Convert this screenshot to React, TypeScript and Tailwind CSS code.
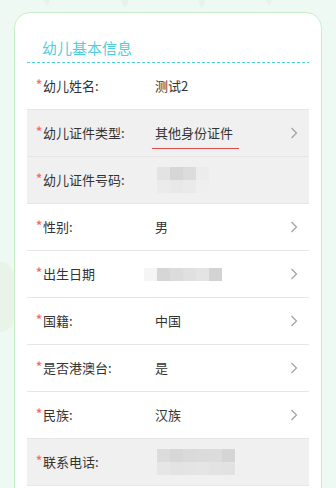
import type { ReactNode } from 'react';

const font = '"Noto Sans CJK SC", "Liberation Sans", sans-serif';

type Row = {
    label: string;
    value?: ReactNode;
    arrow?: boolean;
    gray?: boolean;
};

function Mosaic({ rows, offset = 0 }: { rows: string[][]; offset?: number }) {
    return (
        <div className="flex flex-col" style={{ marginLeft: offset }}>
            {rows.map((r, i) => (
                <div key={i} className="flex">
                    {r.map((c, j) => (
                        <span key={j} className="block h-[13px] w-[13px]" style={{ background: c }} />
                    ))}
                </div>
            ))}
        </div>
    );
}

function Chevron() {
    return (
        <svg width="8" height="12" viewBox="0 0 8 12" className="shrink-0">
            <path d="M1.5 1 L6.5 6 L1.5 11" fill="none" stroke="#a0a0a0" strokeWidth="1.2" />
        </svg>
    );
}

const rows: Row[] = [
    { label: '幼儿姓名:', value: '测试2' },
    {
        label: '幼儿证件类型:',
        arrow: true,
        gray: true,
        value: (
            <span className="-ml-[3px] box-border block h-[32px] w-[87px] border-b border-[#dc4b4b] pl-[3px] pt-[6px] leading-[20px]">
                其他身份证件
            </span>
        ),
    },
    {
        label: '幼儿证件号码:',
        gray: true,
        value: (
            <Mosaic
                offset={2}
                rows={[
                    ['#e3e3e3', '#d6d6d6', '#dcdcdc', '#ececec'],
                    ['#ebebeb', '#e8e8e8', '#eaeaea', '#efefef'],
                ]}
            />
        ),
    },
    { label: '性别:', value: '男', arrow: true },
    {
        label: '出生日期',
        arrow: true,
        value: (
            <Mosaic
                offset={-11}
                rows={[['#f5f5f5', '#d6d6d6', '#dcdcdc', '#e0e0e0', '#e4e4e4', '#d3d3d3']]}
            />
        ),
    },
    { label: '国籍:', value: '中国', arrow: true },
    { label: '是否港澳台:', value: '是', arrow: true },
    { label: '民族:', value: '汉族', arrow: true },
    {
        label: '联系电话:',
        gray: true,
        value: (
            <Mosaic
                offset={2}
                rows={[
                    ['#dcdcdc', '#d7d7d7', '#dadada', '#dbdbdb', '#dcdcdc', '#d5d5d5'],
                    ['#e6e6e6', '#e3e3e3', '#e4e4e4', '#e5e5e5', '#e3e3e3', '#e2e2e2'],
                ]}
            />
        ),
    },
];

function Leaf({ className }: { className: string }) {
    return (
        <svg viewBox="0 0 20 30" className={className}>
            <path d="M10 0 C18 8 18 20 10 30 C2 20 2 8 10 0 Z" fill="#dcefe6" />
        </svg>
    );
}

export default function App() {
    return (
        <div
            className="relative h-[488px] w-[336px] overflow-hidden bg-[#eef9f3] pt-[12px]"
            style={{ fontFamily: font }}
        >
            <Leaf className="absolute left-[40px] -top-[18px] h-[26px] w-[14px] opacity-60" />
            <Leaf className="absolute left-[118px] -top-[16px] h-[26px] w-[14px] opacity-50" />
            <Leaf className="absolute left-[195px] -top-[16px] h-[26px] w-[14px] opacity-50" />
            <Leaf className="absolute left-[262px] -top-[18px] h-[26px] w-[14px] opacity-50" />
            <div className="absolute left-0 top-[262px] h-[70px] w-[14px] rounded-r-full bg-[#eaf3e8]" />

            <div className="relative mx-[14px] h-[500px] rounded-t-[16px] border border-[#c8eec8] bg-white px-[12px]">
                <div className="flex h-[49px] items-end pb-[4px] pl-[15px] text-[15px] leading-[20px] text-[#4fcfdd]">
                    幼儿基本信息
                </div>
                <div className="h-px bg-[repeating-linear-gradient(90deg,#4fd0df_0px,#4fd0df_3px,transparent_3px,transparent_5px)]" />
                {rows.map((r) => (
                    <div
                        key={r.label}
                        className={
                            'flex h-[47px] items-center border-b border-[#e6e6e6] pl-[9px] pr-[11px] text-[13px] text-[#333] ' +
                            (r.gray ? 'bg-[#f0f0f0]' : 'bg-white')
                        }
                    >
                        <div className="flex w-[119px] shrink-0 items-center">
                            <span className="-mt-[4px] mr-[1px] text-[12px] font-bold leading-none text-[#f56c6c]">*</span>
                            <span className="leading-[20px]">{r.label}</span>
                        </div>
                        <div className="flex h-full flex-1 items-center">{r.value}</div>
                        {r.arrow && <Chevron />}
                    </div>
                ))}
            </div>
        </div>
    );
}
